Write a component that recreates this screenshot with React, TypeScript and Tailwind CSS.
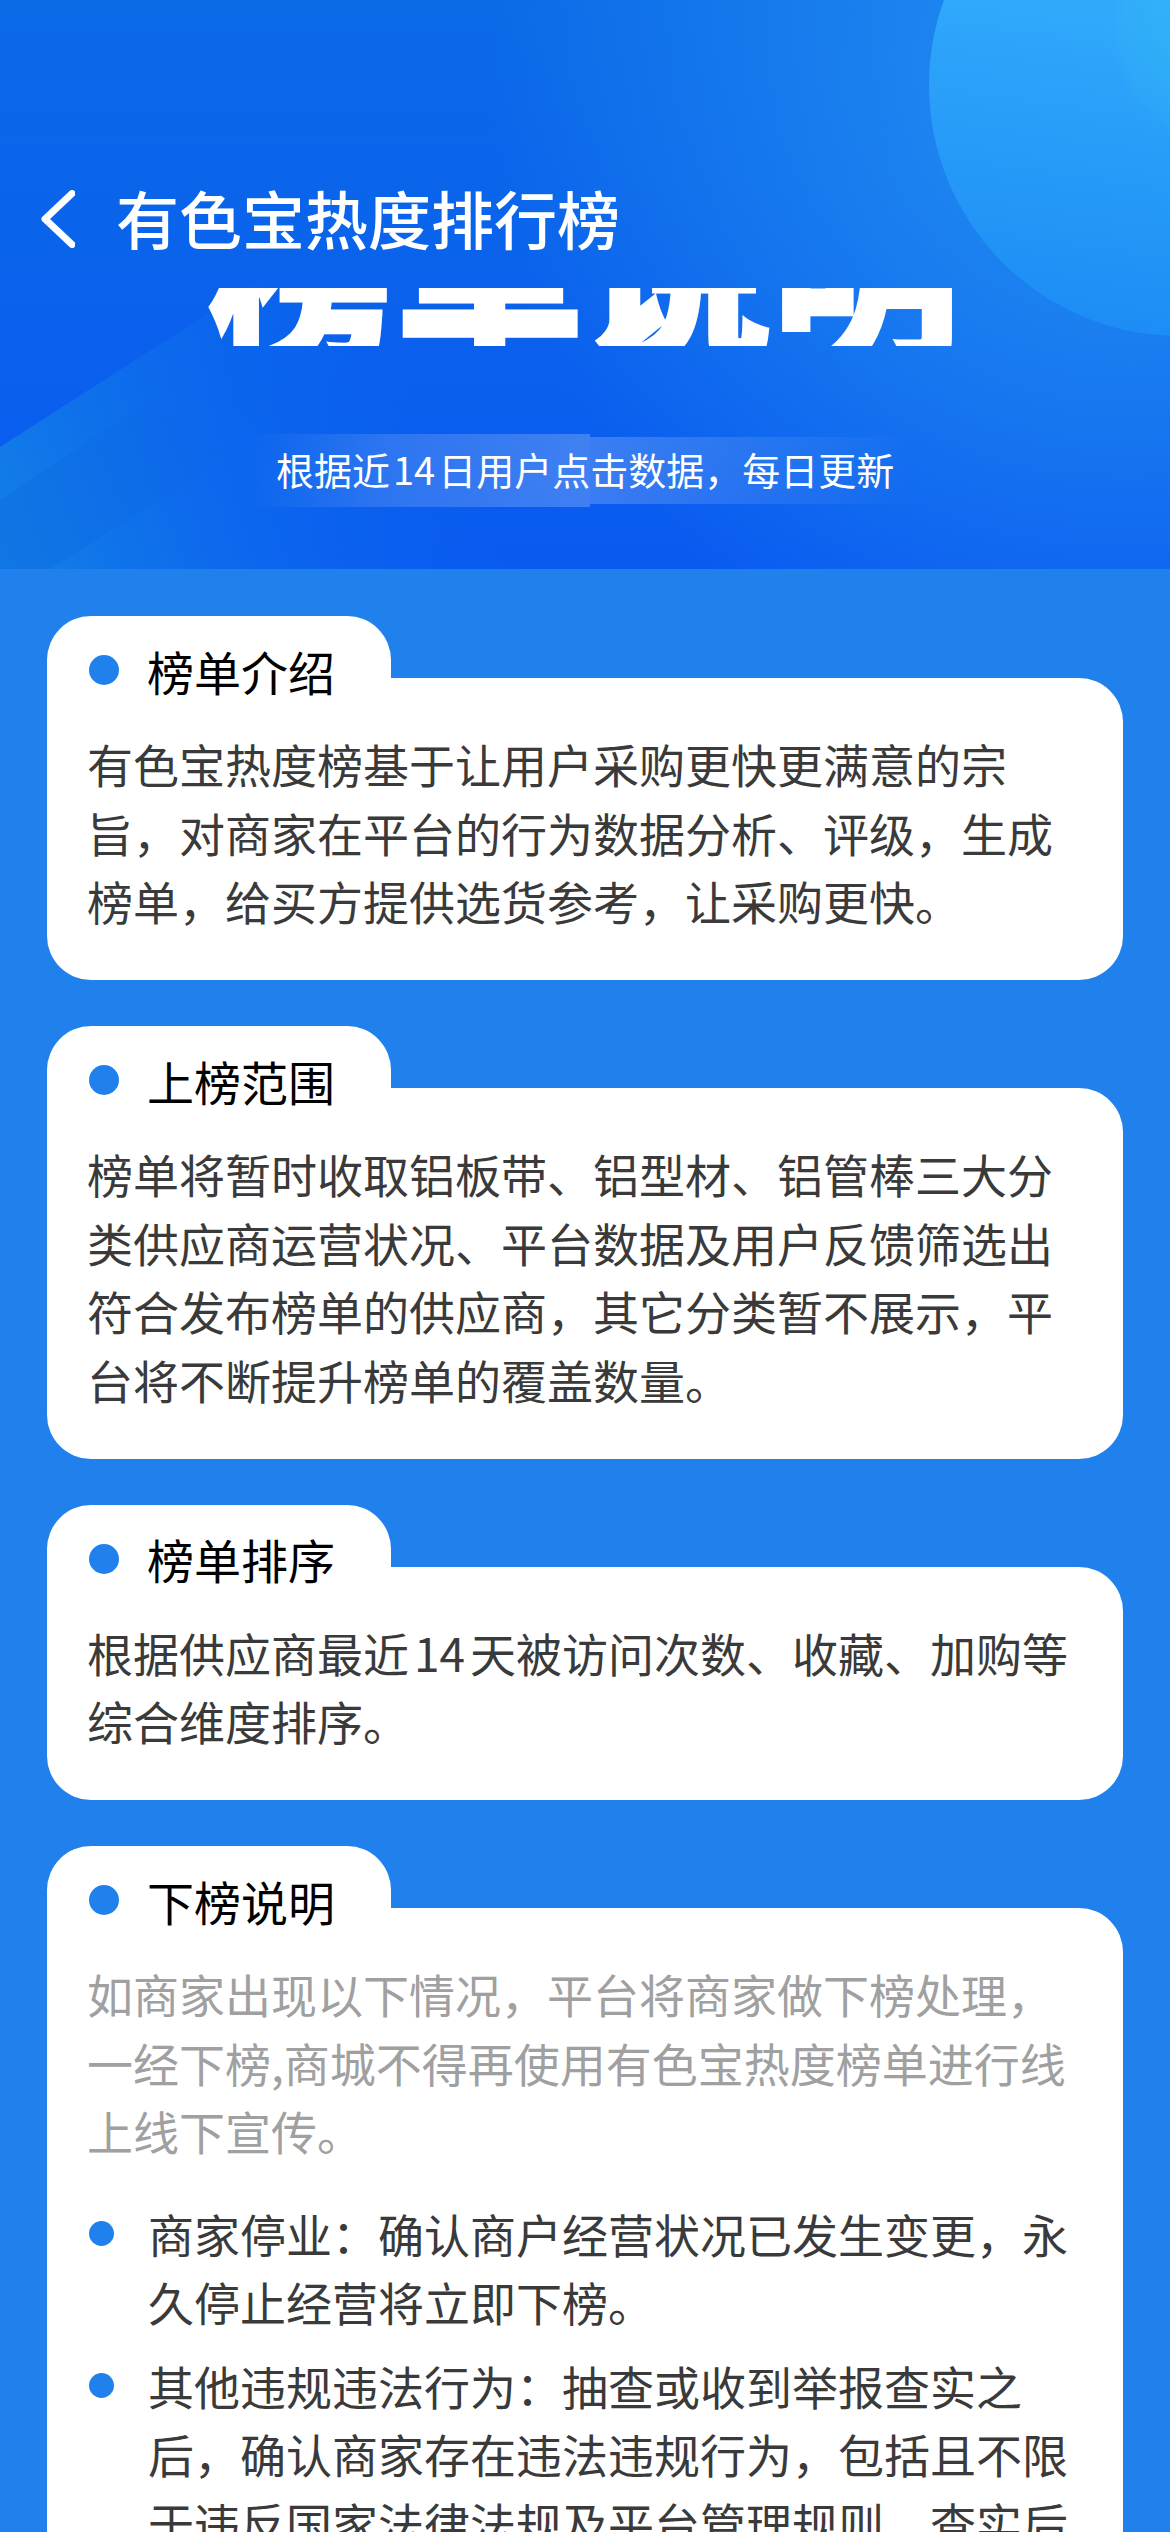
import React from "react";

const FONT = "font-['Noto_Sans_CJK_SC','Noto_Sans',sans-serif]";

interface SectionProps {
  title: string;
  children: React.ReactNode;
}

const Section: React.FC<SectionProps> = ({ title, children }) => {
  return (
    <section>
      <div className="w-[344px] h-[62px] bg-white rounded-t-[44px] pl-[42px]">
        <div className="relative flex items-center h-[108px] gap-[28px]">
          <span className="w-[30px] h-[30px] rounded-full bg-[#2181ec] shrink-0" />
          <h2 className="text-[47px] leading-none font-normal text-black">{title}</h2>
        </div>
      </div>
      <div className="bg-white rounded-[44px] rounded-tl-none pt-[51px] pb-[45.5px] px-[40px]">
        {children}
      </div>
    </section>
  );
};

const Para: React.FC<{ children: React.ReactNode; muted?: boolean }> = ({ children, muted }) => (
  <p className={muted ? "text-[46px] leading-[68.5px] text-[#a0a0a0]" : "text-[46px] leading-[68.5px] text-[#3a3a3a]"}>
    {children}
  </p>
);

const Bullet: React.FC<{ children: React.ReactNode }> = ({ children }) => (
  <li className="flex gap-[34px]">
    <span className="w-[25px] h-[25px] rounded-full bg-[#2181ec] shrink-0 mt-[22px]" />
    <Para>{children}</Para>
  </li>
);

const HeroBackdrop = () => (
  <svg className="absolute inset-0" width="1170" height="569" viewBox="0 0 1170 569">
    <defs>
      <linearGradient id="bandA" x1="0" y1="569" x2="400" y2="340" gradientUnits="userSpaceOnUse">
        <stop offset="0" stopColor="#1a9be0" stopOpacity="0.6" />
        <stop offset="1" stopColor="#0a6cf0" stopOpacity="0" />
      </linearGradient>
      <linearGradient id="bandB" x1="0" y1="569" x2="260" y2="420" gradientUnits="userSpaceOnUse">
        <stop offset="0" stopColor="#0a5fd8" stopOpacity="0.3" />
        <stop offset="1" stopColor="#0a5fd8" stopOpacity="0" />
      </linearGradient>
      <linearGradient id="disc" x1="1130" y1="0" x2="1080" y2="335" gradientUnits="userSpaceOnUse">
        <stop offset="0" stopColor="#31aafb" />
        <stop offset="1" stopColor="#1c8cf5" />
      </linearGradient>
      <radialGradient id="discInner" cx="1235" cy="30" r="125" gradientUnits="userSpaceOnUse">
        <stop offset="0" stopColor="#35c4ec" stopOpacity="0.5" />
        <stop offset="0.9" stopColor="#35c4ec" stopOpacity="0.12" />
        <stop offset="1" stopColor="#35c4ec" stopOpacity="0" />
      </radialGradient>
    </defs>
    <polygon points="0,447 260,280 640,569 0,569" fill="url(#bandA)" />
    <polygon points="0,569 50,569 230,455 150,400 0,500" fill="url(#bandB)" />
    <circle cx="1180" cy="85" r="251" fill="url(#disc)" />
    <circle cx="1235" cy="30" r="125" fill="url(#discInner)" />
  </svg>
);

export default function App() {
  return (
    <div className={`w-[1170px] h-[2532px] overflow-hidden bg-[#2181ec] ${FONT}`}>
      <header className="relative h-[569px] overflow-hidden bg-[radial-gradient(circle_640px_at_1130px_90px,#2490f2_0%,rgba(36,144,242,0)_100%),linear-gradient(180deg,#0b6ae8_0%,#0a5af0_100%)]">
        <HeroBackdrop />
        <div className="relative pt-[179px]">
          <div className="flex items-center h-[80px] pl-[41px] gap-[41px]">
            <svg width="34" height="58" viewBox="0 0 34 58" fill="none">
              <path d="M31 3.5L4 29l27 25.5" stroke="#fff" strokeWidth="7" strokeLinecap="round" strokeLinejoin="round" />
            </svg>
            <h1 className="text-[63px] leading-none font-medium text-white pb-[5px]">有色宝热度排行榜</h1>
          </div>
          <div className="ml-[208px] mt-[29px] w-[752px] h-[58px] overflow-hidden flex items-end">
            <span className="block shrink-0 text-[188px] leading-none font-black text-white whitespace-nowrap mb-[-14px] [-webkit-text-stroke:3px_white]">榜单说明</span>
          </div>
          <div className="relative mt-[88px] flex items-center h-[73px] pl-[250px]">
            <div className="w-[340px] h-[73px] bg-[linear-gradient(90deg,rgba(255,255,255,0)_0%,rgba(255,255,255,0.14)_40%,rgba(255,255,255,0.22)_100%)]" />
            <div className="w-[320px] h-[67px] bg-[linear-gradient(90deg,rgba(255,255,255,0.2)_0%,rgba(255,255,255,0.1)_50%,rgba(255,255,255,0)_100%)]" />
            <p className="absolute left-[276px] top-[13px] text-[38px] leading-[44px] text-white whitespace-nowrap">
              根据近<span className="mx-[3px]">14</span>日用户点击数据，每日更新
            </p>
          </div>
        </div>
      </header>

      <main className="flex flex-col gap-[46px] pt-[47px] px-[47px]">
        <Section title="榜单介绍">
          <Para>有色宝热度榜基于让用户采购更快更满意的宗旨，对商家在平台的行为数据分析、评级，生成榜单，给买方提供选货参考，让采购更快。</Para>
        </Section>
        <Section title="上榜范围">
          <Para>榜单将暂时收取铝板带、铝型材、铝管棒三大分类供应商运营状况、平台数据及用户反馈筛选出符合发布榜单的供应商，其它分类暂不展示，平台将不断提升榜单的覆盖数量。</Para>
        </Section>
        <Section title="榜单排序">
          <Para>
            根据供应商最近<span className="mx-[5px]">14</span>天被访问次数、收藏、加购等综合维度排序。
          </Para>
        </Section>
        <Section title="下榜说明">
          <Para muted>如商家出现以下情况，平台将商家做下榜处理，一经下榜,商城不得再使用有色宝热度榜单进行线上线下宣传。</Para>
          <ul className="mt-[34px] flex flex-col gap-[15px] pl-[2px]">
            <Bullet>商家停业：确认商户经营状况已发生变更，永久停止经营将立即下榜。</Bullet>
            <Bullet>其他违规违法行为：抽查或收到举报查实之后，确认商家存在违法违规行为，包括且不限于违反国家法律法规及平台管理规则，查实后</Bullet>
          </ul>
        </Section>
      </main>
    </div>
  );
}
